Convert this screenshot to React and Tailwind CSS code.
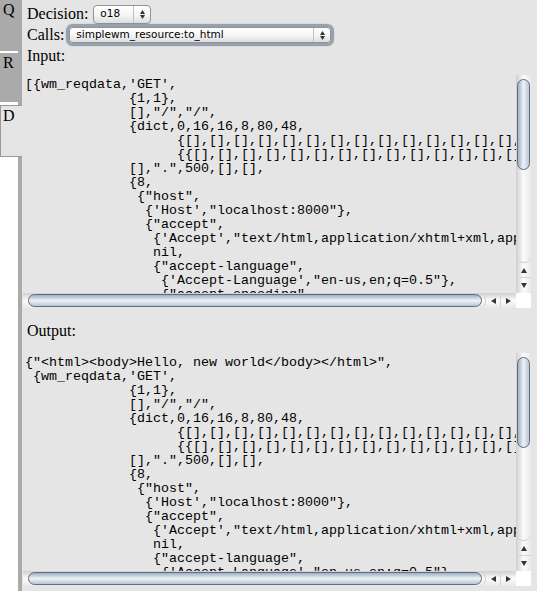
import React from 'react';

const bracketRow = '{[],[],[],[],[],[],[],[],[],[],[],[],[],[],[],[]},';
const bracketRow2 = '{{[],[],[],[],[],[],[],[],[],[],[],[],[],[],[],[]}}},';

const requestLines = [
  "             {1,1},",
  '             [],"/","/",',
  "             {dict,0,16,16,8,80,48,",
  "                   " + bracketRow,
  "                   " + bracketRow2,
  '             [],".",500,[],[],',
  "             {8,",
  '              {"host",',
  "               {'Host',\"localhost:8000\"},",
  '               {"accept",',
  "                {'Accept',\"text/html,application/xhtml+xml,application/xml;q=0.9,*/*;q=0.8\"},",
  "                nil,",
  '                {"accept-language",',
  "                 {'Accept-Language',\"en-us,en;q=0.5\"},",
  '                 {"accept-encoding",',
];

const inputLines = ["[{wm_reqdata,'GET',", ...requestLines];
const outputLines = [
  '{"<html><body>Hello, new world</body></html>",',
  " {wm_reqdata,'GET',",
  ...requestLines,
];

function Tri({ dir }) {
  const vert = dir === 'up' || dir === 'down';
  const pts = {
    up: '0,5 3,0 6,5',
    down: '0,0 6,0 3,5',
    left: '5,0 5,6 0,3',
    right: '0,0 0,6 5,3',
  }[dir];
  return (
    <svg width={vert ? 6 : 5} height={vert ? 5 : 6} viewBox={vert ? '0 0 6 5' : '0 0 5 6'}>
      <polygon points={pts} fill="#333" />
    </svg>
  );
}

function Select({ value, className, focused }) {
  const box = (
    <div className={`flex items-stretch rounded-[4px] border border-[#939393] bg-linear-to-b from-white via-[#f6f6f6] to-[#dedede] ${className}`}>
      <span className="flex-1 pl-[6px] flex items-center text-[10.5px] text-black font-['DejaVu_Sans',sans-serif]">
        {value}
      </span>
      <span className="w-[17px] border-l border-[#c2c2c2] flex flex-col items-center justify-center gap-[1px]">
        <svg width="5" height="4" viewBox="0 0 5 4"><polygon points="0,4 2.5,0 5,4" fill="#333" /></svg>
        <svg width="5" height="4" viewBox="0 0 5 4"><polygon points="0,0 5,0 2.5,4" fill="#333" /></svg>
      </span>
    </div>
  );
  if (!focused) return box;
  return (
    <div className="rounded-[7px] border-[3px] border-[#95a1af] shadow-[0_0_1px_#6b7785]">
      {box}
    </div>
  );
}

function VScroll({ thumbTop, thumbH }) {
  return (
    <div className="w-[15px] h-full flex flex-col bg-linear-to-r from-[#cfcfcf] via-[#fbfbfb] to-[#e8e8e8]">
      <div className="flex-1 px-[1px] border-b border-[#cfcfcf] rounded-b-[7px]">
        <div
          className={`rounded-full border border-[#5f6d7e] bg-linear-to-r from-[#9fb0c4] via-[#eef2f7] to-[#b9c6d5] ${thumbTop} ${thumbH}`}
        />
      </div>
      <div className="h-[15px] flex items-center justify-center border-b border-[#d4d4d4]">
        <Tri dir="up" />
      </div>
      <div className="h-[15px] flex items-center justify-center">
        <Tri dir="down" />
      </div>
    </div>
  );
}

function HScroll({ thumbW }) {
  return (
    <div className="h-[15px] flex bg-linear-to-b from-[#cfcfcf] via-[#fbfbfb] to-[#e8e8e8]">
      <div className="flex-1 py-[1px] pl-[5px] border-r border-[#cfcfcf] rounded-r-[7px]">
        <div className={`h-full rounded-full border border-[#5f6d7e] bg-linear-to-b from-[#9fb0c4] via-[#eef2f7] to-[#b9c6d5] ${thumbW}`} />
      </div>
      <div className="w-[15px] flex items-center justify-center border-r border-[#d4d4d4]">
        <Tri dir="left" />
      </div>
      <div className="w-[15px] flex items-center justify-center">
        <Tri dir="right" />
      </div>
    </div>
  );
}

function CodeBox({ lines }) {
  return (
    <div className="h-[233px] grid grid-cols-[1fr_15px] grid-rows-[1fr_15px]">
      <div className="overflow-hidden pl-[2px] pt-[3px] font-['Liberation_Mono',monospace] text-[13.33px] leading-[14px] text-black whitespace-pre">
        {lines.map((l, i) => (
          <div key={i}>{l}</div>
        ))}
      </div>
      <VScroll thumbTop="mt-[4px]" thumbH="h-[91px]" />
      <HScroll thumbW="w-[454px]" />
      <div className="bg-white" />
    </div>
  );
}

export default function App() {
  const label = "pl-[4px] font-['Liberation_Serif',serif] text-[16px] text-black";
  return (
    <div className="w-[537px] h-[591px] flex bg-white overflow-hidden">
      <div className="w-[18px] shrink-0 flex flex-col font-['Liberation_Serif',serif] text-[16px] leading-[19px] text-black">
        <div className="h-[51px] bg-[#aaaaaa] pl-[3px]">Q</div>
        <div className="h-[49px] mt-[2px] bg-[#aaaaaa] pl-[3px]">R</div>
        <div className="h-[52px] mt-[3px] w-[22px] relative z-10 bg-[#e5e5e5] border border-r-0 border-[#999999] pl-[2px]">
          D
        </div>
      </div>
      <div className="flex-1 flex flex-col bg-[#e5e5e5] border-l-4 border-[#aaaaaa] pt-[4px] pl-[1px] pr-[6px]">
        <div className="h-[20px] flex items-center">
          <span className={label}>Decision:</span>
          <div className="ml-[5px]">
            <Select value="o18" className="w-[58px] h-[19px]" />
          </div>
        </div>
        <div className="h-[22px] flex items-center">
          <span className={label}>Calls:</span>
          <div className="ml-[2px]">
            <Select value="simplewm_resource:to_html" className="w-[262px] h-[16px]" focused />
          </div>
        </div>
        <div className={`${label} h-[19px] leading-[19px]`}>Input:</div>
        <div className="mt-[10px]">
          <CodeBox lines={inputLines} />
        </div>
        <div className={`${label} mt-[13px] h-[19px] leading-[19px]`}>Output:</div>
        <div className="mt-[13px]">
          <CodeBox lines={outputLines} />
        </div>
      </div>
    </div>
  );
}
